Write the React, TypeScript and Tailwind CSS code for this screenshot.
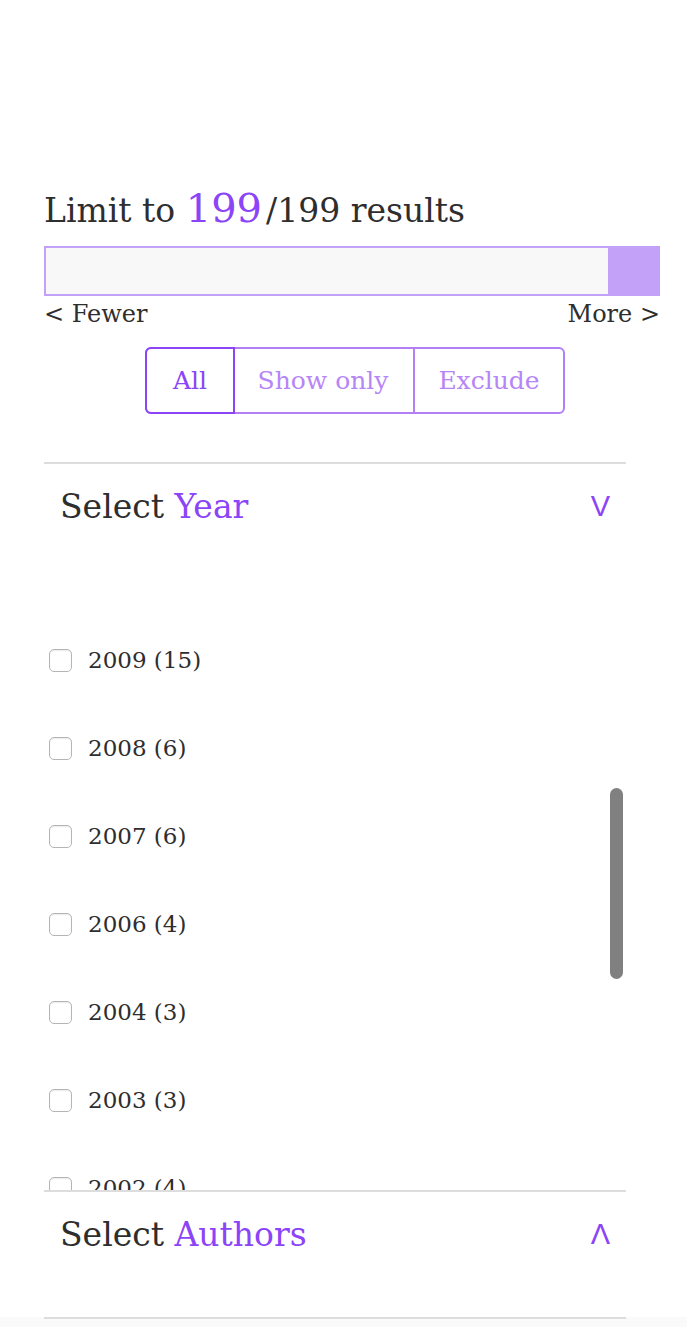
import { FC, useState } from 'react';

const years = [
  { year: 2009, count: 15 },
  { year: 2008, count: 6 },
  { year: 2007, count: 6 },
  { year: 2006, count: 4 },
  { year: 2004, count: 3 },
  { year: 2003, count: 3 },
  { year: 2002, count: 4 },
  { year: 2001, count: 2 },
];

const FilterSection: FC<{ label: string; open: boolean; children?: React.ReactNode }> = ({ label, open, children }) => {
  return (
    <div className='border-t-2 border-[#dddddd]'>
      <div className='h-[84px] flex items-center justify-between pl-[16px] pr-[16px]'>
        <h3 className='text-[33px] text-[#2e2e2e] leading-none'>
          Select <span className='text-[#8b44f7]'>{label}</span>
        </h3>
        <span className="font-['Liberation_Sans',sans-serif] text-[29px] leading-none text-[#8b44f7]">
          {open ? 'V' : 'Λ'}
        </span>
      </div>
      {children}
    </div>
  );
};

const App: FC = () => {
  const [mode, setMode] = useState('all');
  const [checked, setChecked] = useState<number[]>([]);

  const toggle = (y: number) => {
    setChecked(prev => (prev.includes(y) ? prev.filter(v => v !== y) : [...prev, y]));
  };

  return (
    <div className="min-h-[1327px] bg-white font-['DejaVu_Serif',serif] text-[#2e2e2e] flex flex-col">
      <div className='pt-[186px] pl-[44px] pr-[27px]'>
        <h2 className='text-[33px] leading-[44px] whitespace-nowrap'>
          Limit to <span className='text-[40px] text-[#8b44f7] mr-[4px]'>199</span>/199 results
        </h2>
        <div className='mt-[13px] h-[50px] flex border-2 border-[#c4a1f8] bg-[#f8f8f8]'>
          <div className='flex-1'></div>
          <div className='w-[52px] -my-[2px] -mr-[2px] bg-[#c4a1f8]'></div>
        </div>
        <div className='flex justify-between text-[24px] leading-[36px]'>
          <span>&lt; Fewer</span>
          <span>More &gt;</span>
        </div>
        <div className='mt-[15px] flex justify-center pl-[6px]'>
          <div className='flex h-[67px] text-[25px] rounded-[6px] border-2 border-[#b27ff5] text-[#b685f6]'>
            <button
              onClick={() => setMode('all')}
              className={`w-[90px] -m-[2px] rounded-l-[6px] border-2 ${mode === 'all' ? 'border-[#8b44f7] text-[#8b44f7]' : 'border-transparent'}`}
            >
              All
            </button>
            <button onClick={() => setMode('only')} className='w-[182px] border-r-2 border-[#b27ff5]'>
              Show only
            </button>
            <button onClick={() => setMode('exclude')} className='w-[148px]'>
              Exclude
            </button>
          </div>
        </div>
      </div>

      <div className='mt-[48px] ml-[44px] w-[582px]'>
        <FilterSection label='Year' open={true}>
          <div className='relative h-[642px] overflow-hidden'>
            <div className='pt-[68px]'>
              {years.map(y => (
                <label key={y.year} className='h-[88px] flex items-center pl-[5px] cursor-pointer'>
                  <span
                    onClick={() => toggle(y.year)}
                    className={`w-[23px] h-[23px] rounded-[5px] border border-[#b5b5b5] shadow-[inset_0_1px_1px_rgba(0,0,0,0.08)] ${checked.includes(y.year) ? 'bg-[#8b44f7]' : 'bg-white'}`}
                  ></span>
                  <span className='ml-[16px] text-[23px]'>
                    {y.year} ({y.count})
                  </span>
                </label>
              ))}
            </div>
            <div className='absolute right-[3px] top-[240px] w-[13px] h-[191px] rounded-full bg-[#808080]'></div>
          </div>
        </FilterSection>
        <FilterSection label='Authors' open={false}>
          <div className='h-[41px]'></div>
        </FilterSection>
      </div>
      <div className='flex-1 bg-[#fafafa]'>
        <div className='ml-[44px] w-[582px] border-t-2 border-[#dddddd]'></div>
      </div>
    </div>
  );
};

export default App;
